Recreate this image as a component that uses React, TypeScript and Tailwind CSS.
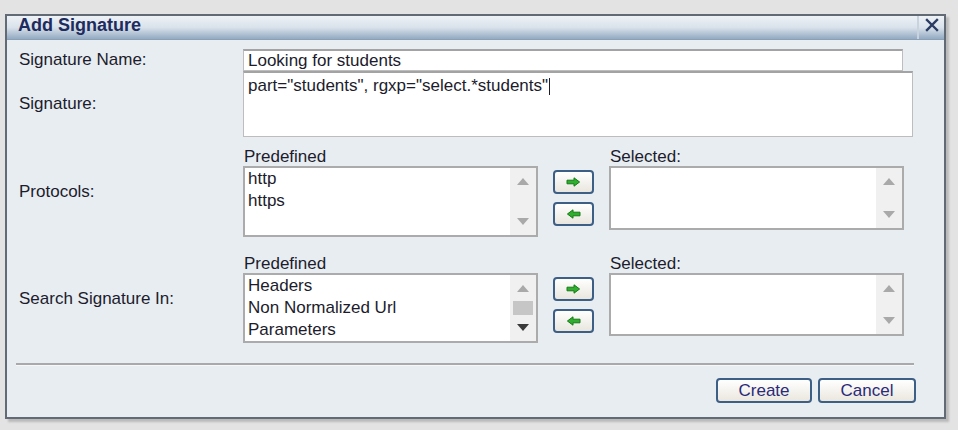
import React from "react";

const font = { fontFamily: '"Liberation Sans", Arial, sans-serif' };

const Arrow = ({ dir }: { dir: "right" | "left" }) => (
  <svg width="15" height="10" viewBox="0 0 15 10" className={dir === "left" ? "-scale-x-100" : ""}>
    <path
      d="M1 3.2 H8 V0.8 L13.6 5 L8 9.2 V6.8 H1 Z"
      fill="#2fae2f"
      stroke="#157a15"
      strokeWidth="1"
      strokeLinejoin="round"
    />
  </svg>
);

const Tri = ({ up, dark }: { up?: boolean; dark?: boolean }) => (
  <svg width="12" height="7" viewBox="0 0 12 7">
    <path d={up ? "M6 0 L12 7 H0 Z" : "M0 0 H12 L6 7 Z"} fill={dark ? "#3a3a3a" : "#a9a9a9"} />
  </svg>
);

const MoveButtons = ({ top }: { top: string }) => (
  <div className={`flex flex-col gap-[8px] w-[41px] ${top}`}>
    {["right", "left"].map((d) => (
      <button
        key={d}
        className="h-[24px] w-[41px] rounded-[4px] border-2 border-[#3d5f86] bg-gradient-to-b from-[#ffffff] to-[#e9e6de] flex items-center justify-center"
      >
        <Arrow dir={d as "right" | "left"} />
      </button>
    ))}
  </div>
);

const ListBox = ({
  items,
  h,
  w,
  thumb,
}: {
  items: string[];
  h: string;
  w: string;
  thumb?: boolean;
}) => (
  <div className={`${h} ${w} border-2 border-[#ababab] bg-white flex`}>
    <div className="flex-1 pl-[3px] text-[17px] leading-[22px] text-[#1c1c2c]">
      {items.map((i) => (
        <div key={i}>{i}</div>
      ))}
    </div>
    <div className="w-[26px] bg-[#f0f0f0] flex flex-col items-center justify-between py-[10px]">
      <Tri up />
      {thumb && <div className="w-[20px] h-[14px] bg-[#c6c6c6] -my-[2px]" />}
      <Tri dark={thumb} />
    </div>
  </div>
);

const Label = ({ children }: { children: React.ReactNode }) => (
  <div className="w-[236px] pl-[12px] shrink-0 text-[17px] leading-[20px] text-[#1c1c2c]">{children}</div>
);

const Header = ({ children }: { children: React.ReactNode }) => (
  <div className="h-[19px] leading-[19px] text-[17px] text-[#1c1c2c] pl-[1px]">{children}</div>
);

const PickerRow = ({
  label,
  items,
  thumb,
  className,
  selH,
  preH,
}: {
  label: string;
  items: string[];
  thumb?: boolean;
  className: string;
  selH: string;
  preH: string;
}) => (
  <div className={`flex items-center ${className}`}>
    <Label>{label}</Label>
    <div className="flex items-start">
      <div>
        <Header>Predefined</Header>
        <ListBox items={items} h={preH} w="w-[295px]" thumb={thumb} />
      </div>
      <div className="pt-[19px] ml-[15px]">
        <MoveButtons top="pt-[4px]" />
      </div>
      <div className="ml-[15px]">
        <Header>Selected:</Header>
        <ListBox items={[]} h={selH} w="w-[295px]" />
      </div>
    </div>
  </div>
);

export default function App() {
  return (
    <div className="min-h-screen w-full bg-[#e3e3e3] pt-[14px] pl-[5px] leading-[20px]" style={font}>
      <div className="w-[941px] h-[405px] border-2 border-[#626a75] bg-[#e8edf2] shadow-[3px_3px_2px_rgba(0,0,0,0.18)] flex flex-col">
        <div className="h-[24px] flex items-stretch justify-between bg-gradient-to-b from-[#edf2f6] via-[#d9e2eb] to-[#93aac1] border-b border-[#8aa0b6]">
          <div className="pl-[11px] text-[18px] font-bold leading-[18px] text-[#1d2b5e]">Add Signature</div>
          <div className="w-[27px] border-l-2 border-[#c8d3de] flex items-start pt-[2px] justify-center">
            <svg width="14" height="14" viewBox="0 0 14 14">
              <path d="M2 2 L12 12 M12 2 L2 12" stroke="#2c3b63" strokeWidth="2.4" strokeLinecap="square" />
            </svg>
          </div>
        </div>

        <div className="pt-[9px]">
          <div className="flex items-center">
            <Label>Signature Name:</Label>
            <div className="h-[22px] w-[660px] bg-white border border-[#bdbdbd] border-t-2 border-t-[#a3a3a3] pl-[4px] text-[17px] leading-[19px] text-[#1c1c2c]">
              Looking for students
            </div>
          </div>
          <div className="flex items-center">
            <Label>Signature:</Label>
            <div className="h-[66px] w-[670px] bg-white border border-[#bdbdbd] border-t-2 border-t-[#a3a3a3] pl-[4px] pt-[2px] text-[17px] leading-[22px] text-[#1c1c2c]">
              part="students", rgxp="select.*students"
              <span className="inline-block w-[1px] h-[17px] bg-[#1c1c2c] align-middle ml-[1px]" />
            </div>
          </div>

          <PickerRow
            label="Protocols:"
            items={["http", "https"]}
            className="mt-[10px]"
            preH="h-[71px]"
            selH="h-[64px]"
          />
          <PickerRow
            label="Search Signature In:"
            items={["Headers", "Non Normalized Url", "Parameters"]}
            thumb
            className="mt-[17px]"
            preH="h-[70px]"
            selH="h-[63px]"
          />

          <div className="ml-[9px] mt-[20px] w-[898px] h-[3px] border-t-2 border-[#a9a9a9] border-b border-b-[#f5f7f9]" />

          <div className="flex justify-end gap-[6px] mt-[12px] pr-[28px]">
            <button className="w-[96px] h-[25px] rounded-[4px] border-2 border-[#3d5f86] bg-gradient-to-b from-[#ffffff] to-[#ebe7df] text-[17px] leading-[19px] text-[#2a2a78]">
              Create
            </button>
            <button className="w-[98px] h-[25px] rounded-[4px] border-2 border-[#3d5f86] bg-gradient-to-b from-[#ffffff] to-[#ebe7df] text-[17px] leading-[19px] text-[#2a2a78]">
              Cancel
            </button>
          </div>
        </div>
      </div>
    </div>
  );
}
